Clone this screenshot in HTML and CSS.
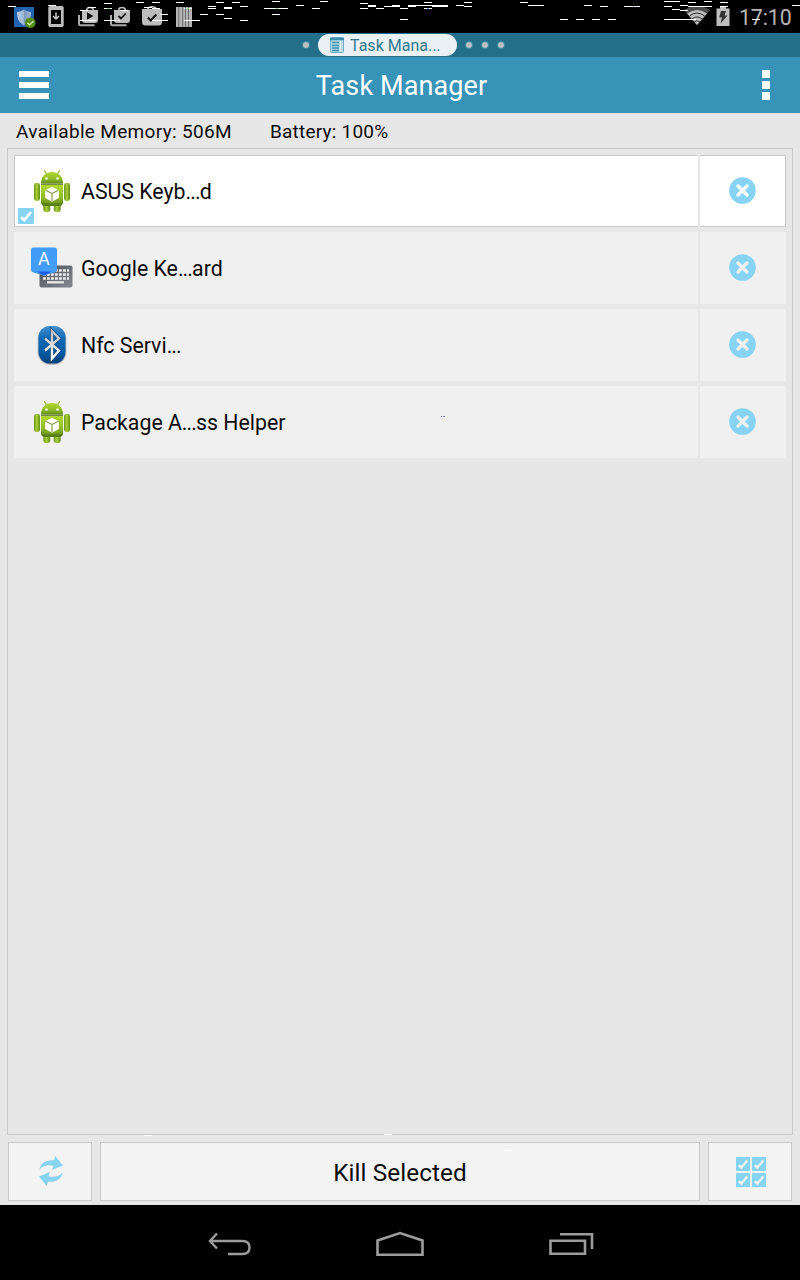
FILE: index.html
```html
<!DOCTYPE html>
<html lang="en">
<head>
<meta charset="utf-8">
<title>Task Manager</title>
<link rel="stylesheet" href="styles.css">
</head>
<body>
<svg class="defs" width="0" height="0" aria-hidden="true">
  <defs>
    <linearGradient id="green" x1="0" y1="0" x2="0" y2="1"><stop offset="0" stop-color="#b3d92d"/><stop offset=".6" stop-color="#8fbb28"/><stop offset="1" stop-color="#648a18"/></linearGradient>
    <linearGradient id="arm" x1="0" y1="0" x2="1" y2="0"><stop offset="0" stop-color="#6b9320"/><stop offset=".45" stop-color="#a9d034"/><stop offset="1" stop-color="#668d1c"/></linearGradient>
    <linearGradient id="bt" x1="0" y1="0" x2="0" y2="1"><stop offset="0" stop-color="#4390ce"/><stop offset=".35" stop-color="#0a68b4"/><stop offset=".7" stop-color="#055ba5"/><stop offset="1" stop-color="#033e7a"/></linearGradient>
    <linearGradient id="rune" x1="0" y1="0" x2="0" y2="1"><stop offset="0" stop-color="#b7bec6"/><stop offset="1" stop-color="#ffffff"/></linearGradient>
    <linearGradient id="kb" x1="0" y1="0" x2="1" y2="1"><stop offset="0" stop-color="#4b5159"/><stop offset="1" stop-color="#858a92"/></linearGradient>
    <linearGradient id="shield" x1="0" y1="0" x2="1" y2="0"><stop offset="0" stop-color="#b9cbe0"/><stop offset=".5" stop-color="#9db5d2"/><stop offset=".51" stop-color="#7797be"/><stop offset="1" stop-color="#a5bbd5"/></linearGradient>
    <symbol id="droid" viewBox="0 0 38 44">
      <path d="M11.500 1.500l2.300 4M26.500 1.500l-2.300 4" stroke="#93b83a" stroke-width="1.200" stroke-linecap="round"/>
      <rect x="1" y="14" width="6" height="18" rx="2.400" fill="url(#arm)"/>
      <rect x="31" y="14" width="6" height="18" rx="2.400" fill="url(#arm)"/>
      <rect x="10.300" y="32" width="7" height="11" rx="2.400" fill="url(#arm)"/>
      <rect x="20.700" y="32" width="7" height="11" rx="2.400" fill="url(#arm)"/>
      <path d="M8 16h22v17q0 3.500-4 3.500H12q-4 0-4-3.500z" fill="url(#green)"/>
      <path d="M8 31.500q1 3 4 3h14q3 0 4-3v1.500q-.5 4-4 4H12q-3.500 0-4-4z" fill="#587d18"/>
      <path d="M8 14.500C8 7 13 3 19 3s11 4 11 11.500z" fill="url(#green)"/>
      <path d="M8 15.200h22" stroke="#567718" stroke-width="1.200"/>
      <circle cx="13.500" cy="9.500" r="1.200" fill="#fff"/><circle cx="24.500" cy="9.500" r="1.200" fill="#fff"/>
      <path d="M19 18l6.800 2.900v8.200L19 32.700l-6.800-3.600v-8.200z" fill="#fff"/>
      <path d="M12.500 21.300L19 24.400l6.500-3.100M19 24.400V32" fill="none" stroke="#80993b" stroke-width="1.100"/>
    </symbol>
    <symbol id="kill" viewBox="0 0 27 27">
      <circle cx="13.500" cy="13.500" r="13.300" fill="#87d3f4"/>
      <path d="M9 9l9 9M18 9l-9 9" stroke="currentColor" stroke-width="3.400" stroke-linecap="round"/>
    </symbol>
    <symbol id="tick" viewBox="0 0 16 16">
      <rect width="16" height="16" rx="1" fill="#87d3f2"/>
      <path d="M3.200 9.200l3 2.900L13 4" fill="none" stroke="currentColor" stroke-width="2.700"/>
    </symbol>
  </defs>
</svg>

<div class="screen">
  <header class="status">
    <div class="notifications">
      <svg width="24" height="24" viewBox="0 0 24 24"><rect x="2" y="3" width="20" height="20" fill="#2462b0"/><path d="M5 8q4-.5 7-2.500 3 2 7 2.500c0 7-2 10.500-7 13.500C7 18.500 5 15 5 8z" fill="url(#shield)"/><circle cx="18.300" cy="18.800" r="5.300" fill="#538e06"/><path d="M15.500 18.800l2.200 2.200 3.800-4" fill="none" stroke="#cde0b2" stroke-width="1.500"/></svg>
      <svg width="24" height="24" viewBox="0 0 24 24"><path fill-rule="evenodd" d="M6 2h12q1.700 0 1.700 1.700v17.600q0 1.700-1.700 1.700H6q-1.700 0-1.700-1.700V3.700Q4.300 2 6 2zm1 4v14h10V6z" fill="#bdbdbd"/><path d="M12 8.500v6M9 12l3 3 3-3" fill="none" stroke="#ccc" stroke-width="1.500"/></svg>
      <svg width="24" height="24" viewBox="0 0 24 24"><path d="M3 11v9q0 1.300 1.500 1.300h14" fill="none" stroke="#ababab" stroke-width="2"/><path fill-rule="evenodd" d="M6 6h4q0-3.200 4-3.200T18 6h4v9.500q0 3.500-3 3.500H9q-3 0-3-3zm5.500 0h5q0-1.800-2.500-1.800T11.500 6z" fill="#bdbdbd"/><path d="M11 8.300v7.400l6.500-3.700z" fill="#111"/></svg>
      <svg width="24" height="24" viewBox="0 0 24 24"><path d="M3 11v9q0 1.300 1.500 1.300h14" fill="none" stroke="#ababab" stroke-width="2"/><path fill-rule="evenodd" d="M6 6h4q0-3.200 4-3.200T18 6h4v9.500q0 3.500-3 3.500H9q-3 0-3-3zm5.500 0h5q0-1.800-2.500-1.800T11.500 6z" fill="#bdbdbd"/><path d="M10.500 12l2.500 2.500 4.700-5" fill="none" stroke="#111" stroke-width="1.800"/></svg>
      <svg width="24" height="24" viewBox="0 0 24 24"><path fill-rule="evenodd" d="M2 5h5q.5-3 5-3t5 3h5v13q0 3.500-3.500 3.500h-13Q2 21.500 2 18zm7 0h6q0-1.500-3-1.500T9 5z" fill="#bdbdbd"/><path d="M7.800 13.500l3 3 5.500-6" fill="none" stroke="#111" stroke-width="2"/></svg>
      <svg width="24" height="24" viewBox="0 0 24 24"><path d="M4 3h16v20H4z" fill="#b5b5b5"/><path d="M6.800 3v20M10.700 3v20M13.500 3v20M16.500 3v20" stroke="#555" stroke-width=".8"/></svg>
    </div>
    <div class="indicators">
      <svg class="wifi" width="26" height="20" viewBox="0 0 26 20"><path d="M0 4Q13-4.500 26 4L13 19z" fill="#4c4c4c"/><path d="M3 7.500Q13 .3 23 7.500L13 19z" fill="#bebebe"/><path d="M5.300 10Q13 4 20.700 10M7.800 13Q13 9 18.200 13M10 16Q13 13.500 16 16" fill="none" stroke="#1c1c1c" stroke-width=".9"/></svg>
      <svg class="battery" width="14" height="20" viewBox="0 0 14 20"><path d="M4 0h6v1.500h3.500V19H.5V1.500H4z" fill="#bebebe"/><path d="M5 4h5L8.500 8.500h3L4.500 16.500l1.500-6H3.200z" fill="#333"/></svg>
      <span class="clock">17:10</span>
    </div>
  </header>

  <nav class="pages">
    <i class="dot"></i>
    <div class="page-pill">
      <svg width="14" height="16" viewBox="0 0 14 16"><rect x=".5" y=".5" width="13" height="15" rx="1" fill="#b7dce7" stroke="#6db0c7"/><path d="M0 2h14" stroke="#388daf" stroke-width="2.500"/><path d="M2 5.500h7M2 8.500h7M2 11h7M2 13.500h7" stroke="#3e91b0" stroke-width="1.300"/><path d="M10.500 4v11" stroke="#ddedf2"/></svg>
      <span class="pill-text">Task Mana...</span>
    </div>
    <i class="dot"></i><i class="dot"></i><i class="dot"></i>
  </nav>

  <div class="titlebar">
    <div class="menu"><i></i><i></i><i></i></div>
    <h1 class="title">Task Manager</h1>
    <div class="more"><i></i><i></i><i></i></div>
  </div>

  <div class="info"><span class="memory">Available Memory: 506M</span><span class="charge">Battery: 100%</span></div>

  <main class="tasks">
    <div class="task selected">
      <div class="app"><svg class="app-icon" width="38" height="44"><use href="#droid"/></svg><span class="name">ASUS Keyb<span class="dots">...</span>d</span><svg class="check" width="16" height="16"><use href="#tick"/></svg></div>
      <div class="end"><svg width="27" height="27"><use href="#kill"/></svg></div>
    </div>
    <div class="task">
      <div class="app"><svg class="app-icon" width="44" height="44" viewBox="0 0 44 44"><rect x="9.500" y="19.500" width="33" height="22" rx="2" fill="url(#kb)"/><path d="M13 24.500h26M13 28.500h26M13 32.500h26" stroke="#eee" stroke-width="2.500" stroke-dasharray="2.800 1.200"/><path d="M17 36.300h17" stroke="#eee" stroke-width="2.200"/><path d="M3.500 1.500h21q2.500 0 2.500 2.500v20q0 2-2.500 2.500L14 29.500 3.500 26.500Q1 26 1 24V4Q1 1.500 3.500 1.500z" fill="#429cf8"/><path d="M7 25.500h14.500L14 29.800z" fill="#155eea"/><text x="13.800" y="19" text-anchor="middle" class="letter">A</text></svg><span class="name">Google Ke<span class="dots">...</span>ard</span></div>
      <div class="end"><svg width="27" height="27"><use href="#kill"/></svg></div>
    </div>
    <div class="task">
      <div class="app"><svg class="app-icon" width="32" height="42" viewBox="0 0 32 42"><rect x="1.500" y="2" width="29" height="39" rx="13" fill="#999" opacity=".6"/><rect x="2.500" y="2" width="27" height="37.500" rx="11.500" fill="url(#bt)"/><path d="M9 14.500l14 12-7 8V7l7 7.500-14 12" fill="none" stroke="#17416d" stroke-width="3.600"/><path d="M9 14.500l14 12-7 8V7l7 7.500-14 12" fill="none" stroke="url(#rune)" stroke-width="2.400"/></svg><span class="name">Nfc Servi<span class="dots">...</span></span></div>
      <div class="end"><svg width="27" height="27"><use href="#kill"/></svg></div>
    </div>
    <div class="task">
      <div class="app"><svg class="app-icon" width="38" height="44"><use href="#droid"/></svg><span class="name">Package A<span class="dots">...</span>ss Helper</span></div>
      <div class="end"><svg width="27" height="27"><use href="#kill"/></svg></div>
    </div>
  </main>

  <footer class="actions">
    <div class="button"><svg class="refresh" width="24" height="30" viewBox="0 0 24 30"><path id="arrow" d="M.5 13.500C1.500 7 7 3.500 15 4.300L16.300 0 24 9.500 13 14l1.500-4.200C9 8.500 4 9.500.5 13.500z" fill="#87d3f0"/><use href="#arrow" transform="rotate(180 12 15)"/></svg></div>
    <div class="button"><span class="kill-text">Kill Selected</span></div>
    <div class="button"><div class="ticks"><svg width="14" height="14"><use href="#tick"/></svg><svg width="14" height="14"><use href="#tick"/></svg><svg width="14" height="14"><use href="#tick"/></svg><svg width="14" height="14"><use href="#tick"/></svg></div></div>
  </footer>

  <nav class="system">
    <svg width="44" height="24" viewBox="0 0 44 24"><path d="M2 9h32.500q7 0 7 6.500t-7 6.500H20M9 1.500L2 9l7 7.500" fill="none" stroke="#9c9c9c" stroke-width="2.400"/></svg>
    <svg width="48" height="26" viewBox="0 0 48 26"><path d="M1.500 9.500L24 2l22.500 7.500v14.200h-45z" fill="none" stroke="#9c9c9c" stroke-width="2.600"/></svg>
    <svg width="46" height="24" viewBox="0 0 46 24"><path d="M2.500 8.800h34.500v12.900H2.500zM12 2.200h32V17" fill="none" stroke="#9c9c9c" stroke-width="2.600"/></svg>
  </nav>

  <svg class="glitches" width="800" height="1280" viewBox="0 0 800 1280" shape-rendering="crispEdges">
    <path stroke="#fff" d="M8 6.500h8M48 5.500h8M88 7.500h8M80 10.500h8M80 20.500h16M104 3.500h8M104 8.500h8M120 10.500h8M104 20.500h16M136 2.500h8M152 2.500h8M144 7.500h8M152 8.500h8M176 2.500h8M184 8.500h8M160 14.500h8M152 20.500h16M184 20.500h16M200 14.500h8M208 6.500h8M208 8.500h8M216 2.500h8M224 8.500h8M216 14.500h8M232 2.500h8M224 7.500h8M224 18.500h8M240 6.500h8M240 20.500h8M264 8.500h24M272 1.500h8M272 14.500h8M296 5.500h8M312 8.500h8M320 1.500h8M360 3.500h8M360 8.500h8M368 5.500h8M368 6.500h8M376 8.500h8M384 6.500h16M392 5.500h8M400 8.500h8M400 19.500h8M408 5.500h40M408 6.500h8M432 6.500h16M424 2.500h8M424 8.500h8M456 5.500h8M464 2.500h8M464 6.500h8M520 2.500h8M528 5.500h16M584 5.500h8M600 6.500h8M624 6.500h16M560 19.500h8M576 19.500h8M592 19.500h8M608 19.500h8M664 1.500h16M664 6.500h8M672 9.500h8M680 5.500h8M680 10.500h8M664 19.500h32M688 2.500h8M688 6.500h24M704 1.500h8M720 2.500h8M720 6.500h8M752 19.500h8M792 5.500h8M144 1135.500h8M384 1134.500h8M504 1150.500h8"/>
    <path stroke="#7779d8" d="M441 416.500h1M443 416.500h2"/>
    <path stroke="#8bd87b" d="M107 8.500h3M276 8.500h2M187 8.500h2"/><path stroke="#47a9ff" d="M427 8.500h2M185 8.500h1M633 6.500h1"/><path stroke="#f29bdc" d="M117 20.500h1"/>
  </svg>
</div>
</body>
</html>
```
FILE: styles.css
```css
* { box-sizing: border-box; }
body { margin: 0; background: #e7e7e7; font-family: Roboto, "Noto Sans", sans-serif; color: #0b0b0b; }
svg { display: block; flex: none; }
.defs { position: absolute; }
.screen { position: relative; width: 800px; height: 1280px; display: flex; flex-direction: column; overflow: hidden; }

.status { height: 33px; flex: none; background: #000; display: flex; justify-content: space-between; padding: 4px 8px 0 12px; }
.notifications { display: flex; gap: 8px; }
.indicators { display: flex; align-items: flex-start; }
.wifi { margin: 2px 6px 0 0; }
.battery { margin: 3px 9px 0 0; }
.clock { color: #b6b6b6; font-size: 21.300px; line-height: 28px; width: 53px; letter-spacing: -.1px; white-space: nowrap; }

.pages { height: 24px; flex: none; background: #246f89; display: flex; align-items: center; padding-left: 303px; gap: 10px; }
.dot { width: 6px; height: 6px; border-radius: 50%; background: #b9bec0; box-shadow: 0 0 0 1px #3288a3; }
.page-pill { width: 139px; height: 22px; margin: 0 -1px; background: #e9f1f4; border-radius: 11px; display: flex; align-items: center; padding-left: 12px; gap: 6px; }
.pill-text { color: #34798f; font-size: 16px; line-height: 22px; padding-top: 2px; white-space: nowrap; }

.titlebar { height: 56px; flex: none; background: #3793b7; display: flex; align-items: center; justify-content: space-between; padding: 0 30px 0 19px; }
.menu, .more { display: flex; flex-direction: column; }
.menu { width: 30px; gap: 5px; }
.menu i { height: 6px; background: #fff; }
.more { width: 8px; gap: 3px; }
.more i { height: 8px; background: #fff; }
.title { margin: 0 8px 0 0; color: #fff; font-size: 27px; line-height: 54px; padding-top: 2px; letter-spacing: .1px; font-weight: 400; white-space: nowrap; }

.info { height: 35px; flex: none; display: flex; padding: 0 16px; font-size: 19px; line-height: 37px; white-space: nowrap; }
.memory { width: 254px; letter-spacing: .33px; }
.charge { letter-spacing: .22px; }

.tasks { height: 987px; flex: none; margin: 0 7px; border: 1px solid #c9c9c9; padding: 6px; display: flex; flex-direction: column; gap: 5px; }
.task { height: 72px; flex: none; display: flex; gap: 2px; color: #f0f0f0; }
.app, .end { background: #f0f0f0; }
.app { position: relative; width: 684px; display: flex; align-items: center; }
.end { width: 86px; display: flex; align-items: center; justify-content: center; padding: 0 1px 2px 0; }
.selected { color: #fff; }
.selected .app, .selected .end { background: #fff; border: 1px solid #c9c9c9; }
.selected .app { border-right: 0; }
.selected .end { border-left: 0; padding-right: 0; }
.app-icon { position: absolute; left: 38px; top: 50%; transform: translate(-50%, -50%); }
.selected .app-icon { left: 37px; }
.name { color: #0b0b0b; font-size: 21.300px; line-height: 30px; margin-left: 67px; white-space: nowrap; padding-top: 2px; }
.dots { letter-spacing: -.9px; }
.selected .name { margin-left: 66px; }
.check { position: absolute; left: 3px; bottom: 2px; }
.letter { font-family: Roboto, sans-serif; font-size: 18px; fill: #fff; }

.actions { height: 70px; flex: none; display: grid; grid-template-columns: 84px 600px 84px; gap: 8px; padding: 7px 8px 4px; }
.button { color: #f3f3f3; background: #f3f3f3; border: 1px solid #c9c9c9; display: flex; align-items: center; justify-content: center; }
.refresh { margin: 0 0 1px 1px; }
.kill-text { color: #0b0b0b; font-size: 24.300px; letter-spacing: .1px; line-height: 30px; white-space: nowrap; padding-top: 2px; }
.ticks { display: grid; grid-template-columns: 14px 14px; gap: 2px; margin-left: 2px; }

.system { height: 75px; flex: none; background: #000; display: flex; align-items: center; gap: 124px; padding: 3px 0 0 208px; }
.glitches { position: absolute; left: 0; top: 0; pointer-events: none; }
```
